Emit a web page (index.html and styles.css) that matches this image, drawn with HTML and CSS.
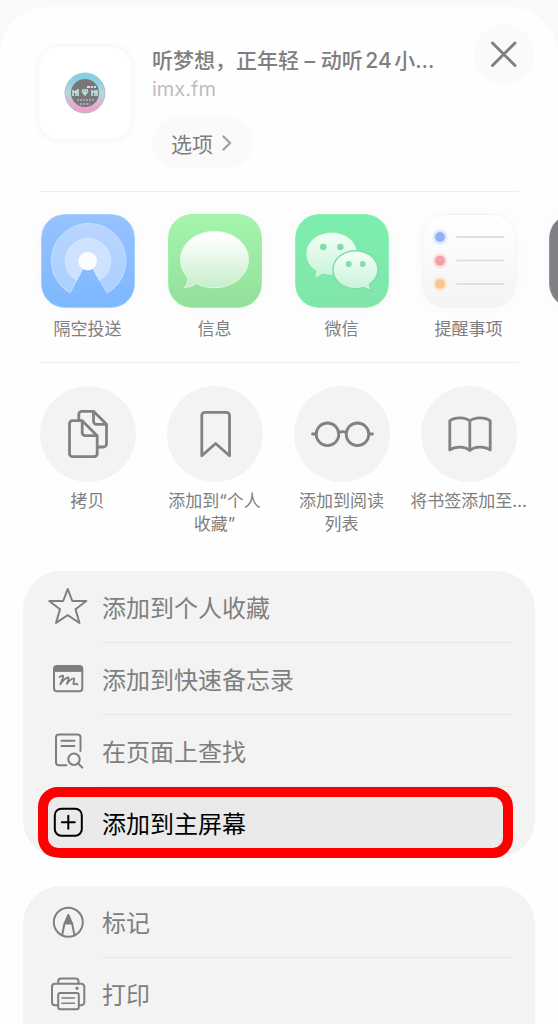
FILE: index.html
```html
<!DOCTYPE html>
<html lang="zh-CN">
<head>
    <meta charset="UTF-8">
    <meta name="viewport" content="width=device-width, initial-scale=1.0">
    <title>共享</title>
    <link rel="stylesheet" href="styles.css">
</head>
<body>

<main class="sheet">
    <header class="header">
        <div class="site-icon">
            <svg width="42" height="42" viewBox="0 0 42 42" aria-hidden="true">
                <defs>
                    <linearGradient id="ring" x1="0" y1="0" x2="0" y2="1">
                        <stop offset="0.1" stop-color="#7fd0e6"/>
                        <stop offset="0.5" stop-color="#b4d8dc"/>
                        <stop offset="0.9" stop-color="#ef9fcb"/>
                    </linearGradient>
                </defs>
                <circle cx="21" cy="21" r="20" fill="url(#ring)" stroke="#b3bfcc"/>
                <circle cx="21" cy="21" r="14" fill="#77777b"/>
                <path d="M23 15h3M27 15h2M30 15h2" stroke="#ddd" stroke-width="2"/>
                <path d="M9 18v6M12 18v6M14 17v7M9 20h5M28 18v6M31 18v6M33 18v6M28 20h5" stroke="#c3e2de" stroke-width="1.6"/>
                <path d="M18 19l3 4 3-4M18 18h6M21 18v6" fill="none" stroke="#b9dfd5" stroke-width="1.6"/>
                <path d="M13 28h17M16 32h10" stroke="#b6b6ba" stroke-width="1.4" stroke-dasharray="2 1"/>
            </svg>
        </div>
        <div class="site-info">
            <h1 class="site-title">听梦想，正年轻 – 动听24小…</h1>
            <p class="site-url">imx.fm</p>
            <button type="button" class="options">
                选项
                <svg width="10" height="16" viewBox="0 0 10 16" aria-hidden="true"><path d="M1.5 1.5L8 8l-6.500 6.500" fill="none" stroke="#a3a3a3" stroke-width="2.400" stroke-linecap="round" stroke-linejoin="round"/></svg>
            </button>
        </div>
        <button type="button" class="close" aria-label="关闭">
            <svg width="60" height="60" viewBox="0 0 60 60"><path d="M18.500 19L41 41.500M41 19L18.500 41.500" stroke="#7f7f7f" stroke-width="2.900" stroke-linecap="round"/></svg>
        </button>
    </header>

    <!-- Apps -->
    <section class="apps">
        <button type="button" class="item">
            <svg class="tile" viewBox="0 0 94 94" aria-hidden="true">
                <defs>
                    <linearGradient id="blue" x1="0" y1="0" x2="0" y2="1">
                        <stop offset="0" stop-color="#98c1ff"/>
                        <stop offset="1" stop-color="#7db8ff"/>
                    </linearGradient>
                </defs>
                <rect x="0.5" y="0.5" width="93" height="93" rx="23" fill="url(#blue)" stroke="#a4d0ff"/>
                <path d="M46.700 45L29 79A37.300 37.300 0 1 1 66.300 79Z" fill="#fff" fill-opacity="0.33" stroke="#c3e0ff"/>
                <path d="M46.700 45L35.600 66.500A22.600 22.600 0 1 1 58.400 66.500Z" fill="#fff" fill-opacity="0.37" stroke="#d3e7ff"/>
                <circle cx="46.700" cy="47" r="9.300" fill="#fafcff"/>
            </svg>
            <span class="label">隔空投送</span>
        </button>
        <button type="button" class="item">
            <svg class="tile" viewBox="0 0 94 94" aria-hidden="true">
                <defs>
                    <linearGradient id="green" x1="0" y1="0" x2="0" y2="1">
                        <stop offset="0" stop-color="#a5f5ac"/>
                        <stop offset="1" stop-color="#93df9b"/>
                    </linearGradient>
                    <linearGradient id="bubble" x1="0" y1="0" x2="0" y2="1">
                        <stop offset="0.1" stop-color="#fff"/>
                        <stop offset="1" stop-color="#c6eeca"/>
                    </linearGradient>
                </defs>
                <rect x="0.5" y="0.5" width="93" height="93" rx="23" fill="url(#green)" stroke="#a2efaa"/>
                <path d="M46.500 17.300C65.500 17.300 80.500 29.800 80.500 45.500S65.500 73.700 46.500 73.700C39.500 73.700 33 72 28 69.300C25 72 21 73.600 16.200 73.400C19.300 70.800 20 67.500 19.500 63.300C15 58.500 12.500 52.300 12.500 45.500C12.500 29.800 27.500 17.300 46.500 17.300Z" fill="url(#bubble)" stroke="#dcfadf"/>
            </svg>
            <span class="label">信息</span>
        </button>
        <button type="button" class="item">
            <svg class="tile" viewBox="0 0 94 94" aria-hidden="true">
                <defs>
                    <linearGradient id="mint" x1="0" y1="0" x2="0" y2="1">
                        <stop offset="0" stop-color="#7ceeae"/>
                        <stop offset="1" stop-color="#82e5ab"/>
                    </linearGradient>
                    <linearGradient id="chat" x1="0" y1="0" x2="0" y2="1">
                        <stop offset="0" stop-color="#f3fff8"/>
                        <stop offset="1" stop-color="#c9f3da"/>
                    </linearGradient>
                </defs>
                <rect x="0.5" y="0.5" width="93" height="93" rx="23" fill="url(#mint)" stroke="#8af5b7"/>
                <path d="M36.700 18.700C51 18.700 62 28 62 39.700S51 60.700 36.700 60.700C33.500 60.700 30.500 60.300 27.800 59.500L20.300 63.800L21.500 56.800C15 52.800 11.400 46.700 11.400 39.700C11.400 28 22.500 18.700 36.700 18.700Z" fill="url(#chat)"/>
                <path d="M60.500 37.400C72.500 37.400 82.200 45.500 82.200 55.700C82.200 61.300 79 66.300 73.700 69.800L74.800 75.500L68.300 72.800C66 73.600 63.300 74 60.500 74C48.500 74 38.800 65.900 38.800 55.700S48.500 37.400 60.500 37.400Z" fill="none" stroke="#80dda8" stroke-width="3"/>
                <path d="M60.500 37.400C72.500 37.400 82.200 45.500 82.200 55.700C82.200 61.300 79 66.300 73.700 69.800L74.800 75.500L68.300 72.800C66 73.600 63.300 74 60.500 74C48.500 74 38.800 65.900 38.800 55.700S48.500 37.400 60.500 37.400Z" fill="url(#chat)"/>
                <g fill="#80dda8">
                    <circle cx="28.300" cy="33" r="3.300"/>
                    <circle cx="45.300" cy="33" r="3.300"/>
                    <circle cx="53.700" cy="50" r="2.900"/>
                    <circle cx="67.700" cy="50" r="2.900"/>
                </g>
            </svg>
            <span class="label">微信</span>
        </button>
        <button type="button" class="item">
            <svg class="tile" viewBox="0 0 94 94" aria-hidden="true">
                <defs>
                    <linearGradient id="paper" x1="0" y1="0" x2="0" y2="1">
                        <stop offset="0" stop-color="#fff"/>
                        <stop offset="1" stop-color="#f4f4f4"/>
                    </linearGradient>
                </defs>
                <rect x="0.5" y="0.5" width="93" height="93" rx="23" fill="url(#paper)" stroke="#f3f3f3"/>
                <circle cx="18" cy="23" r="7.500" fill="#dfe9ff"/>
                <circle cx="18" cy="46.700" r="7.500" fill="#fbe0e1"/>
                <circle cx="18" cy="70" r="7.500" fill="#fdebda"/>
                <circle cx="18" cy="23" r="5" fill="#8fb2f6"/>
                <circle cx="18" cy="46.700" r="5" fill="#f1a0a4"/>
                <circle cx="18" cy="70" r="5" fill="#f8c291"/>
                <path d="M34.500 23H82M34.500 46.500H82M34.500 70H82" stroke="#dfdfdf" stroke-width="2"/>
            </svg>
            <span class="label">提醒事项</span>
        </button>
        <button type="button" class="item" aria-label="更多">
            <svg class="tile" viewBox="0 0 94 94" aria-hidden="true">
                <rect x="0.5" y="0.5" width="93" height="93" rx="23" fill="#808084" stroke="#97979b"/>
            </svg>
        </button>
    </section>

    <!-- Actions -->
    <section class="actions">
        <button type="button" class="item">
            <svg class="circle" viewBox="0 0 96 96" aria-hidden="true">
                <path d="M38.800 34V28.300a3 3 0 0 1 3-3H53.500L66.500 38.300V58a3 3 0 0 1-3 3H58M53.500 25.300V35.300a3 3 0 0 0 3 3H66.500"/>
                <path d="M32.500 34.700H42.200L57.200 49.700V67.700a3 3 0 0 1-3 3H32.500a3 3 0 0 1-3-3V37.700a3 3 0 0 1 3-3ZM42.200 34.700V46.700a3 3 0 0 0 3 3H57.200"/>
            </svg>
            <span class="label">拷贝</span>
        </button>
        <button type="button" class="item">
            <svg class="circle" viewBox="0 0 96 96" aria-hidden="true">
                <path d="M34.800 69.800V29.300a3 3 0 0 1 3-3H59.500a3 3 0 0 1 3 3V69.800L48.600 57.500Z"/>
            </svg>
            <span class="label">添加到“个人收藏”</span>
        </button>
        <button type="button" class="item">
            <svg class="circle" viewBox="0 0 96 96" aria-hidden="true">
                <circle cx="33.500" cy="48.300" r="11.300"/>
                <circle cx="63.500" cy="48.300" r="11.300"/>
                <path d="M18.500 48H22M75 48h3.500M44.500 46.500C47 45.300 50 45.300 52.500 46.500"/>
            </svg>
            <span class="label">添加到阅读列表</span>
        </button>
        <button type="button" class="item">
            <svg class="circle" viewBox="0 0 96 96" aria-hidden="true">
                <path d="M48.800 35C44 30.800 34 30.800 28.800 34.800V64C34 60 44 60 48.800 64.500C53.600 60 64 60 69.200 64V34.800C64 30.800 53.600 30.800 48.800 35ZM48.800 35V64"/>
            </svg>
            <span class="label label-wide">将书签添加至…</span>
        </button>
    </section>

    <div class="menu">
        <button type="button" class="row">
            <svg class="icon" viewBox="0 0 40 40" aria-hidden="true"><path d="M19.700 2L24.300 14H38.300L27.500 22.300L31.500 36L19.700 28.200L8 36L12 22.300L1.200 14H15.200Z"/></svg>
            <span class="text">添加到个人收藏</span>
        </button>
        <button type="button" class="row">
            <svg class="icon" viewBox="0 0 40 40" aria-hidden="true">
                <rect x="6" y="7" width="28.300" height="25.300" rx="3"/>
                <path d="M6 12V10a3 3 0 0 1 3-3H31.300a3 3 0 0 1 3 3V12Z" fill="currentColor" stroke-width="1"/>
                <path d="M11.500 18C14 16 16 16 15 18.500L12.300 25.300C14.500 22 17.500 18.800 20 18.300C21.500 18.300 20 21.500 18.800 25C21 22 23.500 19 25.800 19.300C27.500 20 24.500 23.500 25.500 25C26.500 26 28 23.500 29.500 25.500" stroke-width="1.800"/>
            </svg>
            <span class="text">添加到快速备忘录</span>
        </button>
        <button type="button" class="row">
            <svg class="icon" viewBox="0 0 40 40" aria-hidden="true">
                <path d="M32.500 20V6.500a3 3 0 0 0-3-3H11a3 3 0 0 0-3 3V31.300a3 3 0 0 0 3 3H18.500M13.500 9.700H26.500M13.500 15H26.500"/>
                <circle cx="26" cy="28.300" r="5.700"/>
                <path d="M30.200 32.500L34.300 36.600"/>
            </svg>
            <span class="text">在页面上查找</span>
        </button>
        <button type="button" class="row row-active">
            <svg class="icon" viewBox="0 0 40 40" aria-hidden="true">
                <rect x="6.800" y="5.700" width="27" height="27" rx="6.500"/>
                <path d="M20.300 12.700V25.700M13.800 19.200H26.800"/>
            </svg>
            <span class="text">添加到主屏幕</span>
        </button>
    </div>

    <div class="menu menu-last">
        <button type="button" class="row">
            <svg class="icon" viewBox="0 0 40 40" aria-hidden="true">
                <circle cx="20.300" cy="20.200" r="14.500"/>
                <path d="M20.300 13L16.300 22.200L14.300 32.500M20.300 13L24.300 22.200L26.300 32.500"/>
                <path d="M20.300 13L16.500 22H24.100Z" fill="currentColor" stroke-width="1"/>
            </svg>
            <span class="text">标记</span>
        </button>
        <button type="button" class="row">
            <svg class="icon" viewBox="0 0 40 40" aria-hidden="true">
                <path d="M10 31.200H7a3 3 0 0 1-3-3V12.800a3 3 0 0 1 3-3H33.300a3 3 0 0 1 3 3V28.200a3 3 0 0 1-3 3H31M10.200 9.500V7.500a3 3 0 0 1 3-3H27.500a3 3 0 0 1 3 3V9.500"/>
                <rect x="10.200" y="19" width="20.600" height="16.200" rx="2"/>
                <path d="M14 24H26.500M14 29.200H26.500" stroke-width="1.600"/>
                <circle cx="29" cy="14.300" r="1.200" fill="currentColor" stroke-width="1"/>
            </svg>
            <span class="text">打印</span>
        </button>
    </div>
</main>

</body>
</html>
```

FILE: styles.css
```css
body {
    margin: 0;
    height: 100vh;
    overflow: hidden;
    background: #f9f9f9;
    color: #7f7f7f;
    font-family: Inter, "Noto Sans CJK SC", sans-serif;
}

button {
    padding: 0;
    border: none;
    background: none;
    color: inherit;
    font: inherit;
    cursor: pointer;
}

svg {
    display: block;
}

.sheet {
    box-sizing: border-box;
    margin-top: 7px;
    padding-top: 17px;
    border-radius: 48px 48px 0 0;
    background: #fefefe;
}

/* Header */
.header {
    display: flex;
    align-items: flex-start;
    margin: 0 24px 0 39px;
}

.site-icon {
    display: flex;
    align-items: center;
    justify-content: center;
    flex: none;
    width: 92px;
    height: 92px;
    margin: 23px 21px 0 0;
    border-radius: 20px;
    background: #fff;
    box-shadow: 0 0 8px rgba(0, 0, 0, 0.06);
}

.site-info {
    flex: 1;
    min-width: 0;
    margin-top: 23px;
}

.site-title {
    margin: 0;
    font-size: 21px;
    font-weight: 500;
    line-height: 28px;
    white-space: nowrap;
    text-autospace: normal;
}

.site-url {
    margin: 0;
    color: #bdbdbd;
    font-size: 20px;
    line-height: 28px;
}

.options {
    display: flex;
    align-items: center;
    gap: 9px;
    height: 51px;
    margin-top: 14px;
    padding: 0 21px 0 19px;
    border-radius: 26px;
    background: #fafafa;
    font-size: 21px;
}

.close {
    flex: none;
    width: 60px;
    height: 60px;
    border-radius: 50%;
    background: #fafafa;
}

.apps,
.actions {
    display: flex;
    overflow: hidden;
    padding-left: 24px;
}

.apps {
    position: relative;
    margin-top: 23px;
    padding-top: 23px;
}

.actions {
    position: relative;
    margin-top: 21px;
    padding-top: 24px;
}

.apps::before,
.actions::before {
    content: "";
    position: absolute;
    top: 0;
    left: 39px;
    right: 39px;
    height: 1px;
    background: #ededed;
}

.item {
    display: flex;
    flex: 0 0 127px;
    flex-direction: column;
    align-items: center;
}

.tile {
    width: 94px;
    height: 94px;
    margin-bottom: 10px;
    border-radius: 24px;
    box-shadow: 0 0 20px rgba(0, 0, 0, 0.03);
}

.circle {
    width: 96px;
    height: 96px;
    margin-bottom: 8px;
    border-radius: 50%;
    background: #f3f3f3;
    fill: none;
    stroke: #828282;
    stroke-width: 2.8px;
    stroke-linecap: round;
    stroke-linejoin: round;
}

.label {
    max-width: 98px;
    font-size: 17px;
    line-height: 23px;
    text-align: center;
}

.label-wide {
    max-width: none;
    white-space: nowrap;
}

/* Menu cards */
.menu {
    margin: 35px 23px 0;
    overflow: hidden;
    border-radius: 38px;
    background: #f3f3f3;
}

.menu-last {
    margin-top: 28px;
    border-radius: 38px 38px 0 0;
}

.row {
    position: relative;
    display: flex;
    align-items: center;
    width: 100%;
    height: 71px;
    padding-left: 25px;
    font-size: 24px;
    text-align: left;
}

.row + .row {
    margin-top: 1px;
}

.row:not(:last-child)::after {
    content: "";
    position: absolute;
    top: 100%;
    left: 79px;
    right: 23px;
    height: 1px;
    background: #e6e6e6;
}

.icon {
    flex: none;
    width: 40px;
    height: 40px;
    margin-right: 14px;
    fill: none;
    stroke: currentColor;
    stroke-width: 2px;
    stroke-linecap: round;
    stroke-linejoin: round;
}

.row-active {
    color: #000;
}

/* Red frame round the highlighted row */
.row-active::before {
    content: "";
    position: absolute;
    inset: 0 22px 0 15px;
    border: 10px solid #fe0000;
    border-radius: 20px;
    background: #eaeaea;
}

.row-active .icon,
.row-active .text {
    position: relative;
}
```
